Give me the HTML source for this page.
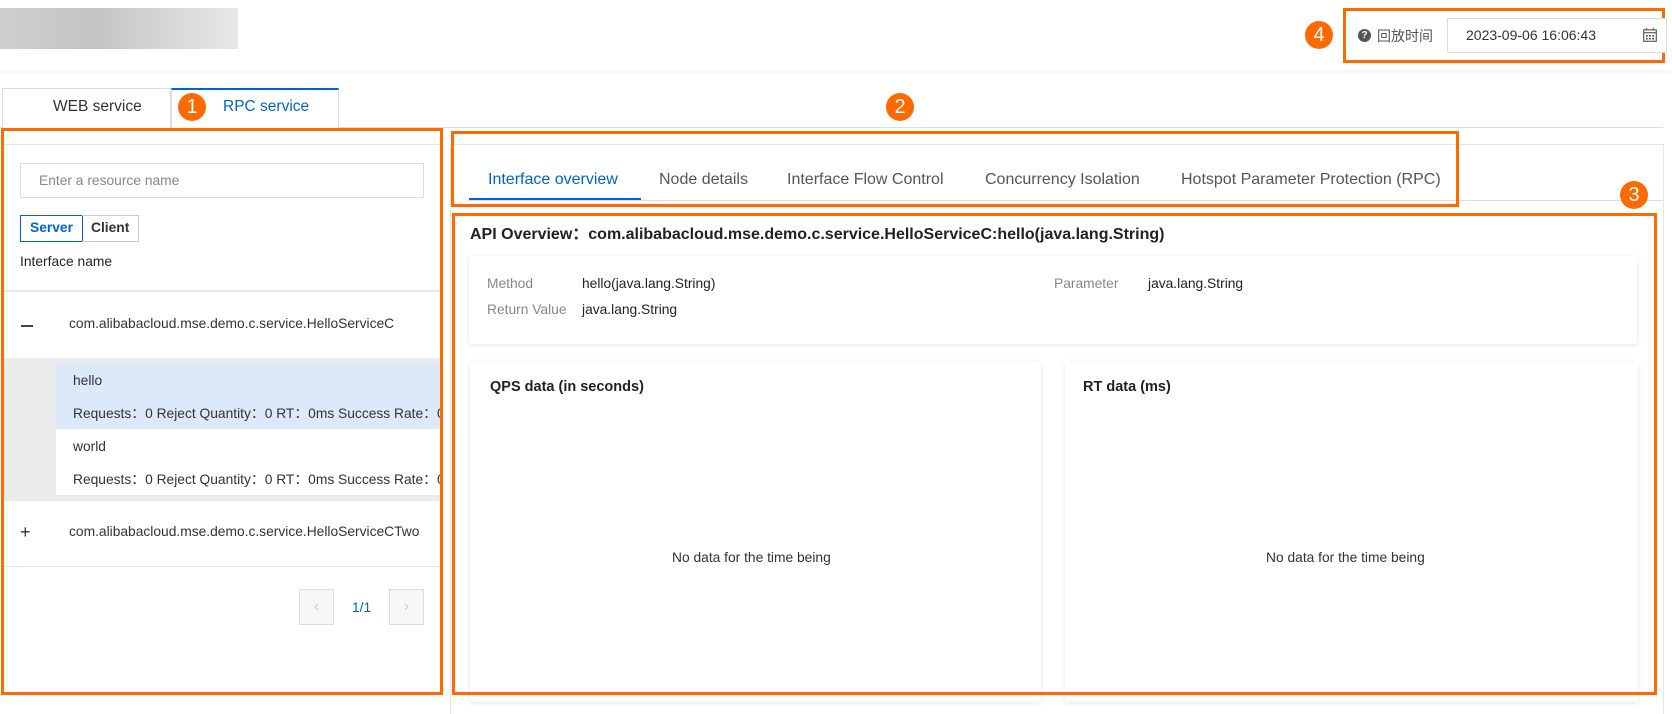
<!DOCTYPE html>
<html><head><meta charset="utf-8"><style>
*{box-sizing:border-box;margin:0;padding:0}
body{width:1672px;height:704px;position:relative;overflow:hidden;background:#fff;font-family:"Liberation Sans","Noto Sans CJK SC",sans-serif;color:#333;font-size:13.8px}
.a{position:absolute}
.ob{position:absolute;border:3px solid #ff6a00}
.circ{position:absolute;width:28px;height:28px;border-radius:50%;background:#ff6a00;color:#fff;font-size:20px;line-height:28px;text-align:center}
.t{position:absolute;white-space:nowrap}
</style></head><body>
<div class="a" style="left:0;top:0;width:1672px;height:70px;background:#fff;box-shadow:0 2px 4px rgba(0,0,0,0.05)"></div>
<div class="a" style="left:0;top:8px;width:238px;height:41px;background:linear-gradient(90deg,#cfcfcf,#c4c4c4 40%,#dcdcdc 80%,#e8e8e8)"></div>
<div class="circ" style="left:1305px;top:21px">4</div>
<div class="ob" style="left:1343px;top:8px;width:322px;height:55px"></div>
<div class="a" style="left:1358px;top:29px;width:13px;height:13px;border-radius:50%;background:#555;color:#fff;font-size:10px;font-weight:bold;line-height:13px;text-align:center">?</div>
<div class="t" style="left:1377px;top:26px;font-size:14px;color:#555">回放时间</div>
<div class="a" style="left:1447px;top:18px;width:220px;height:35px;border:1px solid #ddd;background:#fff"></div>
<div class="t" style="left:1466px;top:27px;font-size:14px;color:#333">2023-09-06 16:06:43</div>
<svg class="a" style="left:1642px;top:27px" width="16" height="16" viewBox="0 0 14 14"><rect x="1.5" y="2.5" width="11" height="10" fill="none" stroke="#555"/><line x1="1.5" y1="5" x2="12.5" y2="5" stroke="#555"/><g fill="#555"><rect x="3.5" y="7" width="1.5" height="1.5"/><rect x="6.2" y="7" width="1.5" height="1.5"/><rect x="9" y="7" width="1.5" height="1.5"/><rect x="3.5" y="9.5" width="1.5" height="1.5"/><rect x="6.2" y="9.5" width="1.5" height="1.5"/><rect x="9" y="9.5" width="1.5" height="1.5"/></g><line x1="4" y1="1" x2="4" y2="3" stroke="#555"/><line x1="10" y1="1" x2="10" y2="3" stroke="#555"/></svg>

<div class="a" style="left:0;top:127px;width:1663px;height:1px;background:#ddd"></div>
<div class="a" style="left:2px;top:88px;width:169px;height:40px;border:1px solid #ddd;border-bottom:none;background:#fff"></div>
<div class="t" style="left:53px;top:98px;font-size:15.5px;color:#333">WEB service</div>
<div class="a" style="left:171px;top:88px;width:168px;height:40px;border:1px solid #ddd;border-top:2px solid #0064c8;border-bottom:none;background:#fff"></div>
<div class="circ" style="left:178px;top:93px">1</div>
<div class="t" style="left:223px;top:98px;font-size:15.5px;color:#0064c8">RPC service</div>
<div class="circ" style="left:886px;top:93px">2</div>

<div class="a" style="left:4px;top:144px;width:436px;height:1px;background:#e5e5e5"></div>
<div class="a" style="left:20px;top:163px;width:404px;height:35px;border:1px solid #ddd"></div>
<div class="t" style="left:39px;top:173px;color:#888">Enter a resource name</div>
<div class="a" style="left:20px;top:215px;width:63px;height:27px;border:1px solid #0064c8"></div>
<div class="t" style="left:30px;top:220px;font-weight:bold;color:#0064c8">Server</div>
<div class="a" style="left:82px;top:215px;width:57px;height:27px;border:1px solid #ccc;border-left:none"></div>
<div class="t" style="left:91px;top:220px;font-weight:bold;color:#333">Client</div>
<div class="t" style="left:20px;top:254px;color:#222">Interface name</div>
<div class="a" style="left:4px;top:290px;width:436px;height:2px;background:#e8e8e8"></div>
<div class="a" style="left:21px;top:325px;width:12px;height:1.5px;background:#444"></div>
<div class="t" style="left:69px;top:316px;color:#333">com.alibabacloud.mse.demo.c.service.HelloServiceC</div>
<div class="a" style="left:4px;top:358px;width:436px;height:143px;background:#ebebeb"></div>
<div class="a" style="left:56px;top:363px;width:384px;height:66px;background:#dbe9fb;overflow:hidden">
<div class="t" style="left:17px;top:10px;color:#333">hello</div>
<div class="t" style="left:17px;top:39px;color:#333">Requests：0 Reject Quantity：0 RT：0ms Success Rate：0%</div></div>
<div class="a" style="left:56px;top:429px;width:384px;height:66px;background:#fff;overflow:hidden">
<div class="t" style="left:17px;top:10px;color:#333">world</div>
<div class="t" style="left:17px;top:39px;color:#333">Requests：0 Reject Quantity：0 RT：0ms Success Rate：0%</div></div>
<div class="t" style="left:20px;top:522px;font-size:18px;color:#333">+</div>
<div class="t" style="left:69px;top:524px;color:#333">com.alibabacloud.mse.demo.c.service.HelloServiceCTwo</div>
<div class="a" style="left:4px;top:566px;width:436px;height:1px;background:#e5e5e5"></div>
<div class="a" style="left:299px;top:589px;width:35px;height:36px;border:1px solid #ddd;background:#f7f7f7;color:#ccc;text-align:center;line-height:34px;font-size:16px">‹</div>
<div class="t" style="left:352px;top:600px;color:#0064c8">1/1</div>
<div class="a" style="left:389px;top:589px;width:35px;height:36px;border:1px solid #ddd;background:#f7f7f7;color:#ccc;text-align:center;line-height:34px;font-size:16px">›</div>
<div class="ob" style="left:1px;top:128px;width:442px;height:567px"></div>

<div class="a" style="left:450px;top:144px;width:1214px;height:570px;border:1px solid #e5e5e5;border-bottom:none"></div>
<div class="a" style="left:468px;top:200px;width:1195px;height:1px;background:#ddd"></div>
<div class="t" style="left:488px;top:171px;font-size:16px;color:#0064c8">Interface overview</div>
<div class="a" style="left:469px;top:198px;width:172px;height:2px;background:#0064c8"></div>
<div class="t" style="left:659px;top:171px;font-size:16px;color:#555">Node details</div>
<div class="t" style="left:787px;top:171px;font-size:16px;color:#555">Interface Flow Control</div>
<div class="t" style="left:985px;top:171px;font-size:16px;color:#555">Concurrency Isolation</div>
<div class="t" style="left:1181px;top:171px;font-size:16px;color:#555">Hotspot Parameter Protection (RPC)</div>
<div class="ob" style="left:451px;top:131px;width:1008px;height:76px"></div>
<div class="circ" style="left:1620px;top:181px">3</div>
<div class="t" style="left:470px;top:220px;font-size:16px;font-weight:bold;color:#222">API Overview：com.alibabacloud.mse.demo.c.service.HelloServiceC:hello(java.lang.String)</div>
<div class="a" style="left:469px;top:256px;width:1168px;height:88px;background:#fff;box-shadow:0 1px 5px rgba(0,0,0,0.1)"></div>
<div class="t" style="left:487px;top:276px;color:#888">Method</div>
<div class="t" style="left:582px;top:276px;color:#222">hello(java.lang.String)</div>
<div class="t" style="left:487px;top:302px;color:#888">Return Value</div>
<div class="t" style="left:582px;top:302px;color:#222">java.lang.String</div>
<div class="t" style="left:1054px;top:276px;color:#888">Parameter</div>
<div class="t" style="left:1148px;top:276px;color:#222">java.lang.String</div>
<div class="a" style="left:470px;top:362px;width:571px;height:340px;background:#fff;box-shadow:0 1px 5px rgba(0,0,0,0.1)"></div>
<div class="a" style="left:1065px;top:362px;width:573px;height:340px;background:#fff;box-shadow:0 1px 5px rgba(0,0,0,0.1)"></div>
<div class="t" style="left:490px;top:379px;font-size:14.5px;font-weight:bold;color:#222">QPS data (in seconds)</div>
<div class="t" style="left:1083px;top:379px;font-size:14.5px;font-weight:bold;color:#222">RT data (ms)</div>
<div class="t" style="left:672px;top:550px;color:#333">No data for the time being</div>
<div class="t" style="left:1266px;top:550px;color:#333">No data for the time being</div>
<div class="ob" style="left:452px;top:213px;width:1205px;height:482px"></div>
</body></html>
